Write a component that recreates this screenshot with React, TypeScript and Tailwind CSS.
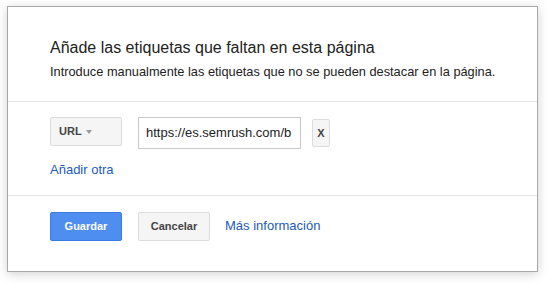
import React from 'react';

export default function App() {
  return (
    <div className="h-[283px] w-[551px] bg-white pt-[6px] pl-[7px]" style={{ fontFamily: '"Liberation Sans", Arial, sans-serif' }}>
      <div className="w-[531px] h-[266px] border border-[#a8a8a8] bg-white shadow-[0_2px_10px_rgba(0,0,0,0.18)] flex flex-col">
        <div className="h-[95px] border-b border-[#e5e5e5] pl-[42px] pt-[31px]">
          <h1 className="text-[16px] leading-[20px] text-[#222]">Añade las etiquetas que faltan en esta página</h1>
          <p className="mt-[6px] text-[12.8px] leading-[16px] text-[#222]">Introduce manualmente las etiquetas que no se pueden destacar en la página.</p>
        </div>
        <div className="h-[94px] border-b border-[#e5e5e5] pl-[42px] pt-[15px]">
          <div className="flex items-start">
            <button className="w-[72px] h-[29px] border border-[#dcdcdc] bg-[#f5f5f5] rounded-[2px] text-[11px] font-bold text-[#444] flex items-center pl-[8px] gap-[4px]">
              URL
              <span className="block w-0 h-0 border-l-[3.5px] border-r-[3.5px] border-t-[4px] border-l-transparent border-r-transparent border-t-[#999]" />
            </button>
            <div className="ml-[16px] w-[163px] h-[32px] border border-[#c8c8c8] flex items-center pl-[7px] text-[13px] text-[#222] overflow-hidden whitespace-nowrap">
              https://es.semrush.com/b
            </div>
            <button className="ml-[11px] mt-[2px] w-[18px] h-[28px] border border-[#dcdcdc] bg-[#f5f5f5] rounded-[2px] text-[11px] font-bold text-[#444] flex items-center justify-center">
              X
            </button>
          </div>
          <a className="block mt-[13px] text-[13px] leading-[16px] text-[#1c5bb8]">Añadir otra</a>
        </div>
        <div className="pl-[42px] pt-[16px] flex items-center">
          <button className="w-[72px] h-[29px] rounded-[2px] bg-[#4d8ef0] border border-[#3c7ae3] text-white text-[11px] font-bold">Guardar</button>
          <button className="ml-[16px] w-[72px] h-[29px] rounded-[2px] bg-[#f5f5f5] border border-[#dcdcdc] text-[#444] text-[11px] font-bold">Cancelar</button>
          <a className="ml-[15px] text-[13px] text-[#1c5bb8] -mt-[2px]">Más información</a>
        </div>
      </div>
    </div>
  );
}
